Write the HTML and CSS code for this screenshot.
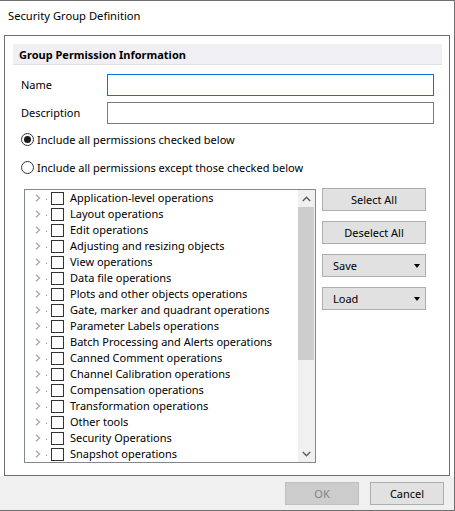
FILE: index.html
```html
<!DOCTYPE html>
<html>
<head>
<meta charset="utf-8">
<link rel="stylesheet" href="styles.css">
</head>
<body>
<div class="window">
  <div class="titlebar">Security Group Definition</div>
  <div class="group">
    <div class="group-header">Group Permission Information</div>
    <div class="field-row"><span class="label">Name</span><div class="input focused"></div></div>
    <div class="field-row second"><span class="label">Description</span><div class="input"></div></div>
    <div class="radio-row first"><span class="radio checked"></span><span>Include all permissions checked below</span></div>
    <div class="radio-row"><span class="radio"></span><span>Include all permissions except those checked below</span></div>
    <div class="main">
      <div class="tree">
        <div class="tree-list">
          <div class="row"><svg class="chev" width="6" height="8" viewBox="0 0 6 8"><path d="M1 0.8 L4.4 4 L1 7.2" fill="none" stroke="#a8a8a8" stroke-width="1.4"/></svg><span class="dot"></span><span class="cb"></span><span class="txt">Application-level operations</span></div>
          <div class="row"><svg class="chev" width="6" height="8" viewBox="0 0 6 8"><path d="M1 0.8 L4.4 4 L1 7.2" fill="none" stroke="#a8a8a8" stroke-width="1.4"/></svg><span class="dot"></span><span class="cb"></span><span class="txt">Layout operations</span></div>
          <div class="row"><svg class="chev" width="6" height="8" viewBox="0 0 6 8"><path d="M1 0.8 L4.4 4 L1 7.2" fill="none" stroke="#a8a8a8" stroke-width="1.4"/></svg><span class="dot"></span><span class="cb"></span><span class="txt">Edit operations</span></div>
          <div class="row"><svg class="chev" width="6" height="8" viewBox="0 0 6 8"><path d="M1 0.8 L4.4 4 L1 7.2" fill="none" stroke="#a8a8a8" stroke-width="1.4"/></svg><span class="dot"></span><span class="cb"></span><span class="txt">Adjusting and resizing objects</span></div>
          <div class="row"><svg class="chev" width="6" height="8" viewBox="0 0 6 8"><path d="M1 0.8 L4.4 4 L1 7.2" fill="none" stroke="#a8a8a8" stroke-width="1.4"/></svg><span class="dot"></span><span class="cb"></span><span class="txt">View operations</span></div>
          <div class="row"><svg class="chev" width="6" height="8" viewBox="0 0 6 8"><path d="M1 0.8 L4.4 4 L1 7.2" fill="none" stroke="#a8a8a8" stroke-width="1.4"/></svg><span class="dot"></span><span class="cb"></span><span class="txt">Data file operations</span></div>
          <div class="row"><svg class="chev" width="6" height="8" viewBox="0 0 6 8"><path d="M1 0.8 L4.4 4 L1 7.2" fill="none" stroke="#a8a8a8" stroke-width="1.4"/></svg><span class="dot"></span><span class="cb"></span><span class="txt">Plots and other objects operations</span></div>
          <div class="row"><svg class="chev" width="6" height="8" viewBox="0 0 6 8"><path d="M1 0.8 L4.4 4 L1 7.2" fill="none" stroke="#a8a8a8" stroke-width="1.4"/></svg><span class="dot"></span><span class="cb"></span><span class="txt">Gate, marker and quadrant operations</span></div>
          <div class="row"><svg class="chev" width="6" height="8" viewBox="0 0 6 8"><path d="M1 0.8 L4.4 4 L1 7.2" fill="none" stroke="#a8a8a8" stroke-width="1.4"/></svg><span class="dot"></span><span class="cb"></span><span class="txt">Parameter Labels operations</span></div>
          <div class="row"><svg class="chev" width="6" height="8" viewBox="0 0 6 8"><path d="M1 0.8 L4.4 4 L1 7.2" fill="none" stroke="#a8a8a8" stroke-width="1.4"/></svg><span class="dot"></span><span class="cb"></span><span class="txt">Batch Processing and Alerts operations</span></div>
          <div class="row"><svg class="chev" width="6" height="8" viewBox="0 0 6 8"><path d="M1 0.8 L4.4 4 L1 7.2" fill="none" stroke="#a8a8a8" stroke-width="1.4"/></svg><span class="dot"></span><span class="cb"></span><span class="txt">Canned Comment operations</span></div>
          <div class="row"><svg class="chev" width="6" height="8" viewBox="0 0 6 8"><path d="M1 0.8 L4.4 4 L1 7.2" fill="none" stroke="#a8a8a8" stroke-width="1.4"/></svg><span class="dot"></span><span class="cb"></span><span class="txt">Channel Calibration operations</span></div>
          <div class="row"><svg class="chev" width="6" height="8" viewBox="0 0 6 8"><path d="M1 0.8 L4.4 4 L1 7.2" fill="none" stroke="#a8a8a8" stroke-width="1.4"/></svg><span class="dot"></span><span class="cb"></span><span class="txt">Compensation operations</span></div>
          <div class="row"><svg class="chev" width="6" height="8" viewBox="0 0 6 8"><path d="M1 0.8 L4.4 4 L1 7.2" fill="none" stroke="#a8a8a8" stroke-width="1.4"/></svg><span class="dot"></span><span class="cb"></span><span class="txt">Transformation operations</span></div>
          <div class="row"><svg class="chev" width="6" height="8" viewBox="0 0 6 8"><path d="M1 0.8 L4.4 4 L1 7.2" fill="none" stroke="#a8a8a8" stroke-width="1.4"/></svg><span class="dot"></span><span class="cb"></span><span class="txt">Other tools</span></div>
          <div class="row"><svg class="chev" width="6" height="8" viewBox="0 0 6 8"><path d="M1 0.8 L4.4 4 L1 7.2" fill="none" stroke="#a8a8a8" stroke-width="1.4"/></svg><span class="dot"></span><span class="cb"></span><span class="txt">Security Operations</span></div>
          <div class="row"><svg class="chev" width="6" height="8" viewBox="0 0 6 8"><path d="M1 0.8 L4.4 4 L1 7.2" fill="none" stroke="#a8a8a8" stroke-width="1.4"/></svg><span class="dot"></span><span class="cb"></span><span class="txt">Snapshot operations</span></div>
        </div>
        <div class="scrollbar">
          <div class="sb-arrow"><svg width="9" height="6" viewBox="0 0 9 6"><path d="M0.8 5 L4.5 1.3 L8.2 5" fill="none" stroke="#606060" stroke-width="1.5"/></svg></div>
          <div class="sb-track"><div class="sb-thumb"></div></div>
          <div class="sb-arrow"><svg width="9" height="6" viewBox="0 0 9 6"><path d="M0.8 1 L4.5 4.7 L8.2 1" fill="none" stroke="#606060" stroke-width="1.5"/></svg></div>
        </div>
      </div>
      <div class="side-buttons">
        <div class="btn center">Select All</div>
        <div class="btn center">Deselect All</div>
        <div class="btn drop"><span>Save</span><span class="tri"></span></div>
        <div class="btn drop"><span>Load</span><span class="tri"></span></div>
      </div>
    </div>
  </div>
  <div class="footer">
    <div class="btn center footer-btn disabled">OK</div>
    <div class="btn center footer-btn">Cancel</div>
  </div>
</div>
</body>
</html>
```

FILE: styles.css
```css
* { box-sizing: border-box; }
html, body { margin: 0; padding: 0; background: #ffffff; }
body {
  font-family: "Noto Sans", "Open Sans", sans-serif;
  font-size: 11px;
  color: #000;
  width: 455px;
  height: 511px;
  overflow: hidden;
}
.window {
  width: 455px;
  height: 511px;
  border-top: 1px solid #6f6f6f;
  border-right: 1px solid #6f6f6f;
  border-bottom: 1px solid #6f6f6f;
  display: flex;
  flex-direction: column;
  background: #ffffff;
}
.titlebar {
  height: 34px;
  padding: 7px 0 0 8px;
  line-height: 16px;
  font-size: 11.2px;
}
.group {
  height: 441px;
  margin-left: 4px;
  margin-right: 4px;
  border: 1px solid #6e6e6e;
  padding: 8px 7px 0 8px;
  display: flex;
  flex-direction: column;
}
.group-header {
  height: 21px;
  background: #f0f0f4;
  border-bottom: 1px solid #e1e1e6;
  font-weight: bold;
  padding: 1px 0 0 6px;
  line-height: 19px;
}
.field-row {
  display: flex;
  align-items: center;
  margin-top: 9px;
  padding-left: 8px;
  height: 22px;
}
.field-row.second { margin-top: 6px; }
.label { width: 86px; margin-top: -1px; }
.input {
  width: 327px;
  height: 22px;
  border: 1px solid #7a7a7a;
  background: #fff;
}
.input.focused { border-color: #0078d7; }
.radio-row {
  display: flex;
  align-items: center;
  height: 16px;
  padding-left: 8px;
  margin-top: 12px;
}
.radio-row.first { margin-top: 7px; }
.radio {
  width: 13px;
  height: 13px;
  border: 1px solid #333;
  border-radius: 50%;
  margin-right: 3px;
  display: flex;
  align-items: center;
  justify-content: center;
  flex: none;
}
.radio.checked::after {
  content: "";
  width: 7px;
  height: 7px;
  border-radius: 50%;
  background: #1a1a1a;
}
.main {
  display: flex;
  margin-top: 14px;
  padding-left: 11px;
  align-items: flex-start;
}
.tree {
  width: 292px;
  height: 274px;
  border: 1px solid #828790;
  display: flex;
}
.tree-list {
  flex: 1;
  overflow: hidden;
}
.row {
  height: 16px;
  display: flex;
  align-items: center;
  padding-left: 10px;
  white-space: nowrap;
}
.chev { flex: none; display: block; }
.dot {
  width: 1px;
  height: 1px;
  background: #8a8a8a;
  margin-left: 5px;
  margin-top: 2px;
  flex: none;
}
.cb {
  width: 13px;
  height: 13px;
  border: 1px solid #333;
  margin-left: 4px;
  flex: none;
  background: #fff;
}
.txt { margin-left: 6px; margin-top: -1px; }
.scrollbar {
  width: 17px;
  background: #f0f0f0;
  display: flex;
  flex-direction: column;
}
.sb-arrow {
  height: 17px;
  display: flex;
  align-items: center;
  justify-content: center;
}
.sb-arrow svg { display: block; }
.sb-track { flex: 1; }
.sb-thumb {
  height: 153px;
  margin: 0 1px 0 0;
  background: #cdcdcd;
}
.side-buttons {
  margin-left: 6px;
  margin-top: -1px;
  display: flex;
  flex-direction: column;
  gap: 10px;
}
.btn {
  width: 104px;
  height: 23px;
  background: #e1e1e1;
  border: 1px solid #adadad;
  display: flex;
  align-items: center;
}
.btn.center { justify-content: center; }
.btn.drop {
  justify-content: space-between;
  padding: 0 5px 0 10px;
}
.tri {
  width: 0;
  height: 0;
  border-left: 3.5px solid transparent;
  border-right: 3.5px solid transparent;
  border-top: 4px solid #000;
  margin-top: 1px;
}
.footer {
  flex: 1;
  background: #f0f0f0;
  display: flex;
  justify-content: flex-end;
  align-items: flex-start;
  padding: 6px 10px 0 0;
  gap: 11px;
}
.footer-btn { width: 74px; }
.btn.disabled {
  background: #cccccc;
  border-color: #bfbfbf;
  color: #838383;
}
```
